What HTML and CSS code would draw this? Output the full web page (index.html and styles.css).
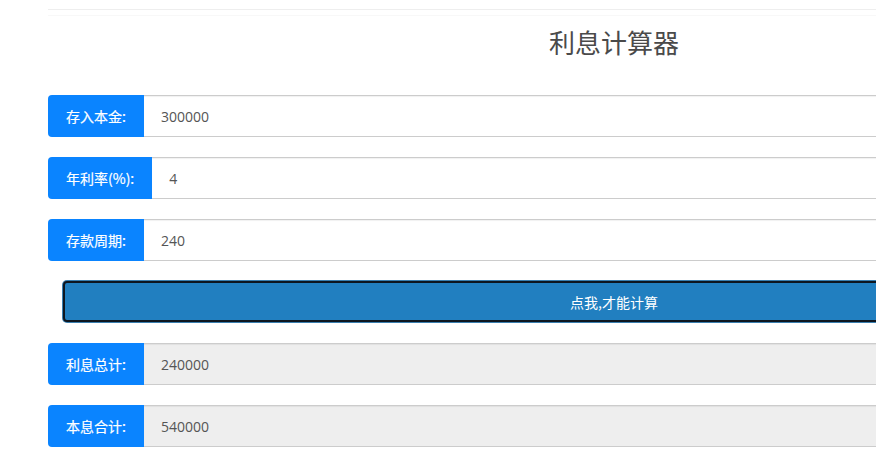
FILE: index.html
```html
<!DOCTYPE html>
<html lang="zh-CN">
<head>
<meta charset="utf-8">
<title>利息计算器</title>
<link rel="stylesheet" href="styles.css">
</head>
<body>
<div class="page">
  <div class="rule"></div>
  <h2 class="title">利息计算器</h2>
  <form class="calc">
    <div class="row">
      <span class="label">存入本金:</span>
      <div class="field">300000</div>
    </div>
    <div class="row">
      <span class="label">年利率(%):</span>
      <div class="field">4</div>
    </div>
    <div class="row">
      <span class="label">存款周期:</span>
      <div class="field">240</div>
    </div>
    <div class="btn-wrap">
      <button type="button" class="btn">点我,才能计算</button>
    </div>
    <div class="row">
      <span class="label">利息总计:</span>
      <div class="field readonly">240000</div>
    </div>
    <div class="row">
      <span class="label">本息合计:</span>
      <div class="field readonly">540000</div>
    </div>
  </form>
</div>
</body>
</html>
```

FILE: styles.css
```css
html, body {
  margin: 0;
  padding: 0;
  background: #fff;
  overflow: hidden;
}
body {
  font-family: "Noto Sans CJK SC", "Noto Sans", sans-serif;
  font-size: 14px;
  color: #555;
}
.page {
  margin-left: 48px;
  width: 1132px;
}
.rule {
  margin-top: 9px;
  height: 5px;
  border-top: 1px solid #eee;
  border-bottom: 1px solid #f8f8f8;
}
.title {
  margin: 8px 0 0;
  font-size: 26px;
  line-height: 36px;
  font-weight: 400;
  text-align: center;
  color: #4a4a4a;
}
.calc {
  margin-top: 35px;
  display: flex;
  flex-direction: column;
  gap: 20px;
}
.row {
  display: flex;
  height: 42px;
}
.label {
  display: flex;
  align-items: center;
  padding: 0 18px 0 18px;
  background: #0a84ff;
  color: #fff;
  border-radius: 4px 0 0 4px;
  font-size: 14px;
  white-space: nowrap;
  -webkit-text-stroke: 0.2px #fff;
}
.field {
  flex: 1;
  display: flex;
  align-items: center;
  padding-left: 17px;
  border-top: 1px solid #ccc;
  border-bottom: 1px solid #ccc;
  box-shadow: inset 0 1px 1px rgba(0,0,0,0.06);
  background: #fff;
  font-family: "Open Sans", "Noto Sans CJK SC", sans-serif;
  font-size: 14px;
  color: #555;
}
.field.readonly {
  background: #eee;
}
.btn-wrap {
  padding: 0 15px;
  margin-bottom: 1px;
}
.btn {
  display: block;
  width: 100%;
  height: 41px;
  margin: 0;
  background: #217fc0;
  color: #fff;
  border: 2px solid #0d1620;
  border-radius: 4px;
  box-shadow: 0 0 0 1px #3a7fb0;
  font-family: "Noto Sans CJK SC", sans-serif;
  font-size: 14px;
  cursor: pointer;
}
```
